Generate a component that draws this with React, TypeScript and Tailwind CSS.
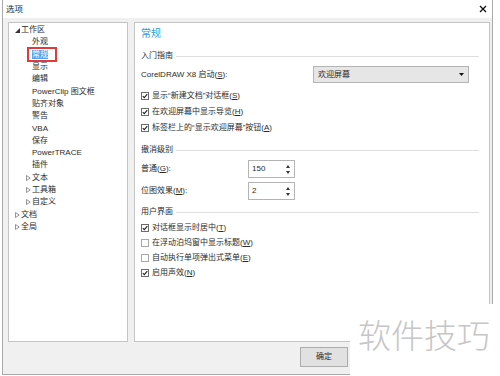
import React from "react";

function Key({ k }: { k: string }) {
  return (
    <>
      (<u>{k}</u>)
    </>
  );
}

function Check({ checked }: { checked: boolean }) {
  return (
    <svg width="8" height="8" viewBox="0 0 8 8" className="shrink-0">
      <rect x="0.5" y="0.5" width="7" height="7" fill="#fff" stroke={checked ? "#6b6b6b" : "#a8a8a8"} />
      {checked && <path d="M1.8 4.2 L3.3 5.7 L6.3 2.2" fill="none" stroke="#222" strokeWidth="1.1" />}
    </svg>
  );
}

function CheckRow({ checked, children, className = "" }: { checked: boolean; children: React.ReactNode; className?: string }) {
  return (
    <div className={`h-[12px] flex items-center gap-[3px] ${className}`}>
      <Check checked={checked} />
      <span className="leading-none">{children}</span>
    </div>
  );
}

function Section({ title, className = "" }: { title: string; className?: string }) {
  return (
    <div className={`h-[12px] flex items-center gap-[3px] ${className}`}>
      <span className="leading-none">{title}</span>
      <div className="flex-1 h-px bg-[#dedede]" />
    </div>
  );
}

function Spin({ value, className = "" }: { value: string; className?: string }) {
  return (
    <div className={`w-[47px] h-[18px] flex border border-[#b4b4b4] bg-white ${className}`}>
      <div className="flex-1 flex items-center pl-[3px] leading-none">{value}</div>
      <div className="w-[13px] flex flex-col items-center justify-center gap-[3px]">
        <svg width="4" height="3" viewBox="0 0 4 3">
          <path d="M2 0 L4 3 L0 3 Z" fill="#333" />
        </svg>
        <svg width="4" height="3" viewBox="0 0 4 3">
          <path d="M0 0 L4 0 L2 3 Z" fill="#333" />
        </svg>
      </div>
    </div>
  );
}

function Expanded() {
  return (
    <svg width="5" height="5" viewBox="0 0 5 5" className="shrink-0">
      <path d="M5 0 L5 5 L0 5 Z" fill="#333" />
    </svg>
  );
}

function Collapsed() {
  return (
    <svg width="5" height="6" viewBox="0 0 5 6" className="shrink-0">
      <path d="M0.5 0.5 L4.2 3 L0.5 5.5 Z" fill="none" stroke="#8a8a8a" strokeWidth="0.9" />
    </svg>
  );
}

function TreeRow({ level, arrow, children }: { level: 0 | 1; arrow?: "open" | "closed"; children: React.ReactNode }) {
  const pad = level === 0 ? "pl-[6px]" : arrow ? "pl-[17px]" : "pl-[23px]";
  return (
    <div className={`h-[12.3px] flex items-center gap-[1px] ${pad}`}>
      {arrow === "open" && <Expanded />}
      {arrow === "closed" && <Collapsed />}
      <span className="leading-none whitespace-nowrap">{children}</span>
    </div>
  );
}

export default function App() {
  const children = ["显示", "编辑", "PowerClip 图文框", "贴齐对象", "警告", "VBA", "保存", "PowerTRACE", "插件"];
  return (
    <div className="relative w-[500px] h-[376px] bg-white overflow-hidden text-[8px] text-[#2b2b2b] font-['Liberation_Sans','Noto_Sans_CJK_SC',sans-serif]">
      <div className="ml-[2px] w-[491px] h-[375px] flex flex-col border-l border-r border-b border-[#a9a9a9] bg-[#f0f0f0]">
        {/* title bar */}
        <div className="h-[18px] bg-white flex items-center justify-between pl-[3px] pr-[5px]">
          <span className="text-[8.5px] leading-none">选项</span>
          <svg width="8" height="8" viewBox="0 0 8 8">
            <path d="M1 1 L7 7 M7 1 L1 7" stroke="#111" strokeWidth="1.3" />
          </svg>
        </div>

        <div className="flex gap-[6px] pl-[5px] pt-[4px]">
          {/* tree */}
          <div className="w-[120px] h-[320px] bg-white border border-[#c4c4c4] pt-[1px]">
            <TreeRow level={0} arrow="open">工作区</TreeRow>
            <TreeRow level={1}>外观</TreeRow>
            <div className="h-[12.3px] flex items-center pl-[23px]">
              <span className="relative h-[9px] flex items-center leading-none bg-[#4da3ee] text-white">
                常规
                <span className="absolute -left-[5px] -right-[9px] -top-[3px] -bottom-[3px] border-2 border-[#e23a3a]" />
              </span>
            </div>
            {children.map((c) => (
              <TreeRow key={c} level={1}>
                {c}
              </TreeRow>
            ))}
            <TreeRow level={1} arrow="closed">文本</TreeRow>
            <TreeRow level={1} arrow="closed">工具箱</TreeRow>
            <TreeRow level={1} arrow="closed">自定义</TreeRow>
            <TreeRow level={0} arrow="closed">文档</TreeRow>
            <TreeRow level={0} arrow="closed">全局</TreeRow>
          </div>

          {/* content */}
          <div className="w-[356px] h-[320px] bg-white border border-[#c4c4c4] pl-[6px] pr-[10px] pt-[3px] flex flex-col">
            <div className="h-[16px] flex items-center text-[10px] leading-none text-[#3198dc]">常规</div>

            <Section title="入门指南" className="mt-[8px]" />
            <div className="h-[17px] mt-[4px] flex items-center justify-between">
              <span className="leading-none">
                CorelDRAW X8 启动<Key k="S" />:
              </span>
              <div className="w-[156px] h-[17px] mr-[10px] flex items-center justify-between pl-[4px] pr-[4px] bg-[#e6e6e6] border border-[#b4b4b4]">
                <span className="leading-none">欢迎屏幕</span>
                <svg width="5" height="3" viewBox="0 0 5 3">
                  <path d="M0 0 L5 0 L2.5 3 Z" fill="#111" />
                </svg>
              </div>
            </div>
            <CheckRow checked className="mt-[7px]">
              显示“新建文档”对话框<Key k="S" />
            </CheckRow>
            <CheckRow checked className="mt-[4px]">
              在欢迎屏幕中显示导览<Key k="H" />
            </CheckRow>
            <CheckRow checked className="mt-[4px]">
              标签栏上的“显示欢迎屏幕”按钮<Key k="A" />
            </CheckRow>

            <Section title="撤消级别" className="mt-[10px]" />
            <div className="mt-[4px] flex items-center">
              <span className="w-[107px] leading-none">
                普通<Key k="G" />:
              </span>
              <Spin value="150" />
            </div>
            <div className="mt-[4px] flex items-center">
              <span className="w-[107px] leading-none">
                位图效果<Key k="M" />:
              </span>
              <Spin value="2" />
            </div>

            <Section title="用户界面" className="mt-[6px]" />
            <CheckRow checked className="mt-[4px]">
              对话框显示时居中<Key k="T" />
            </CheckRow>
            <CheckRow checked={false} className="mt-[3px]">
              在浮动泊坞窗中显示标题<Key k="W" />
            </CheckRow>
            <CheckRow checked={false} className="mt-[3px]">
              自动执行单项弹出式菜单<Key k="E" />
            </CheckRow>
            <CheckRow checked className="mt-[3px]">
              启用声效<Key k="N" />
            </CheckRow>
          </div>
        </div>

        <div className="mt-[5px] pl-[297px]">
          <button className="w-[48px] h-[20px] bg-[#e1e1e1] border border-[#adadad] flex items-center justify-center leading-none text-[8px]">
            确定
          </button>
        </div>
      </div>

      {/* watermark */}
      <div className="absolute left-[350px] top-[304px] w-[150px] h-[72px] bg-white">
        <div className="absolute left-[8px] top-[14px] text-[33px] leading-none font-light text-[#c6c6c6] whitespace-nowrap font-['Noto_Sans_CJK_SC',sans-serif]">
          软件技巧
        </div>
      </div>
    </div>
  );
}
